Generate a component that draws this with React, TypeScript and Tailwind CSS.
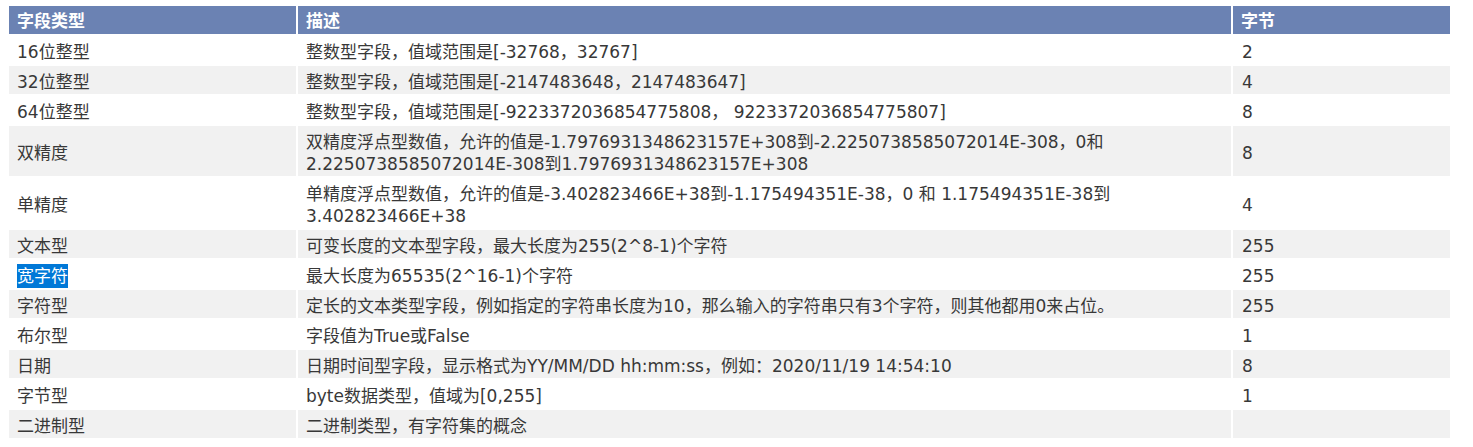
import React from "react";

type Row = { name: React.ReactNode; desc: React.ReactNode; size: string };

const rows: Row[] = [
  { name: "16位整型", desc: "整数型字段，值域范围是[-32768，32767]", size: "2" },
  { name: "32位整型", desc: "整数型字段，值域范围是[-2147483648，2147483647]", size: "4" },
  { name: "64位整型", desc: "整数型字段，值域范围是[-9223372036854775808， 9223372036854775807]", size: "8" },
  {
    name: "双精度",
    desc: (
      <>
        双精度浮点型数值，允许的值是-1.7976931348623157E+308到-2.2250738585072014E-308，0和
        <br />
        2.2250738585072014E-308到1.7976931348623157E+308
      </>
    ),
    size: "8",
  },
  {
    name: "单精度",
    desc: (
      <>
        单精度浮点型数值，允许的值是-3.402823466E+38到-1.175494351E-38，0 和 1.175494351E-38到
        <br />
        3.402823466E+38
      </>
    ),
    size: "4",
  },
  { name: "文本型", desc: "可变长度的文本型字段，最大长度为255(2^8-1)个字符", size: "255" },
  {
    name: <span className="bg-[#0078d7] text-white py-[2px]">宽字符</span>,
    desc: "最大长度为65535(2^16-1)个字符",
    size: "255",
  },
  {
    name: "字符型",
    desc: "定长的文本类型字段，例如指定的字符串长度为10，那么输入的字符串只有3个字符，则其他都用0来占位。",
    size: "255",
  },
  { name: "布尔型", desc: "字段值为True或False", size: "1" },
  { name: "日期", desc: "日期时间型字段，显示格式为YY/MM/DD hh:mm:ss，例如：2020/11/19 14:54:10", size: "8" },
  { name: "字节型", desc: "byte数据类型，值域为[0,255]", size: "1" },
  { name: "二进制型", desc: "二进制类型，有字符集的概念", size: "" },
];

export default function App() {
  return (
    <div className="bg-white w-[1473px] h-[447px] overflow-hidden pl-[7px] pt-[4px] text-[17px] leading-[22px] text-[#383838] font-['DejaVu_Sans','Noto_Sans_CJK_SC',sans-serif]">
      <table className="border-separate border-spacing-[2px] table-fixed w-[1445px]">
        <colgroup>
          <col className="w-[287px]" />
          <col className="w-[933px]" />
          <col className="w-[217px]" />
        </colgroup>
        <thead>
          <tr className="h-[28px]">
            {["字段类型", "描述", "字节"].map((h) => (
              <th
                key={h}
                className="bg-[#6b82b3] text-white font-bold text-left px-2 pt-[4px] pb-[2px] align-middle"
              >
                {h}
              </th>
            ))}
          </tr>
        </thead>
        <tbody>
          {rows.map((r, i) => (
            <tr key={i} className={i % 2 === 1 ? "bg-[#f1f1f1]" : "bg-white"}>
              <td className="px-2 pt-[5px] pb-[1px] align-middle h-[28px]">{r.name}</td>
              <td className="px-2 pt-[5px] pb-[1px] align-middle">{r.desc}</td>
              <td className="pl-[9px] pr-2 pt-[5px] pb-[1px] align-middle">{r.size}</td>
            </tr>
          ))}
        </tbody>
      </table>
    </div>
  );
}
